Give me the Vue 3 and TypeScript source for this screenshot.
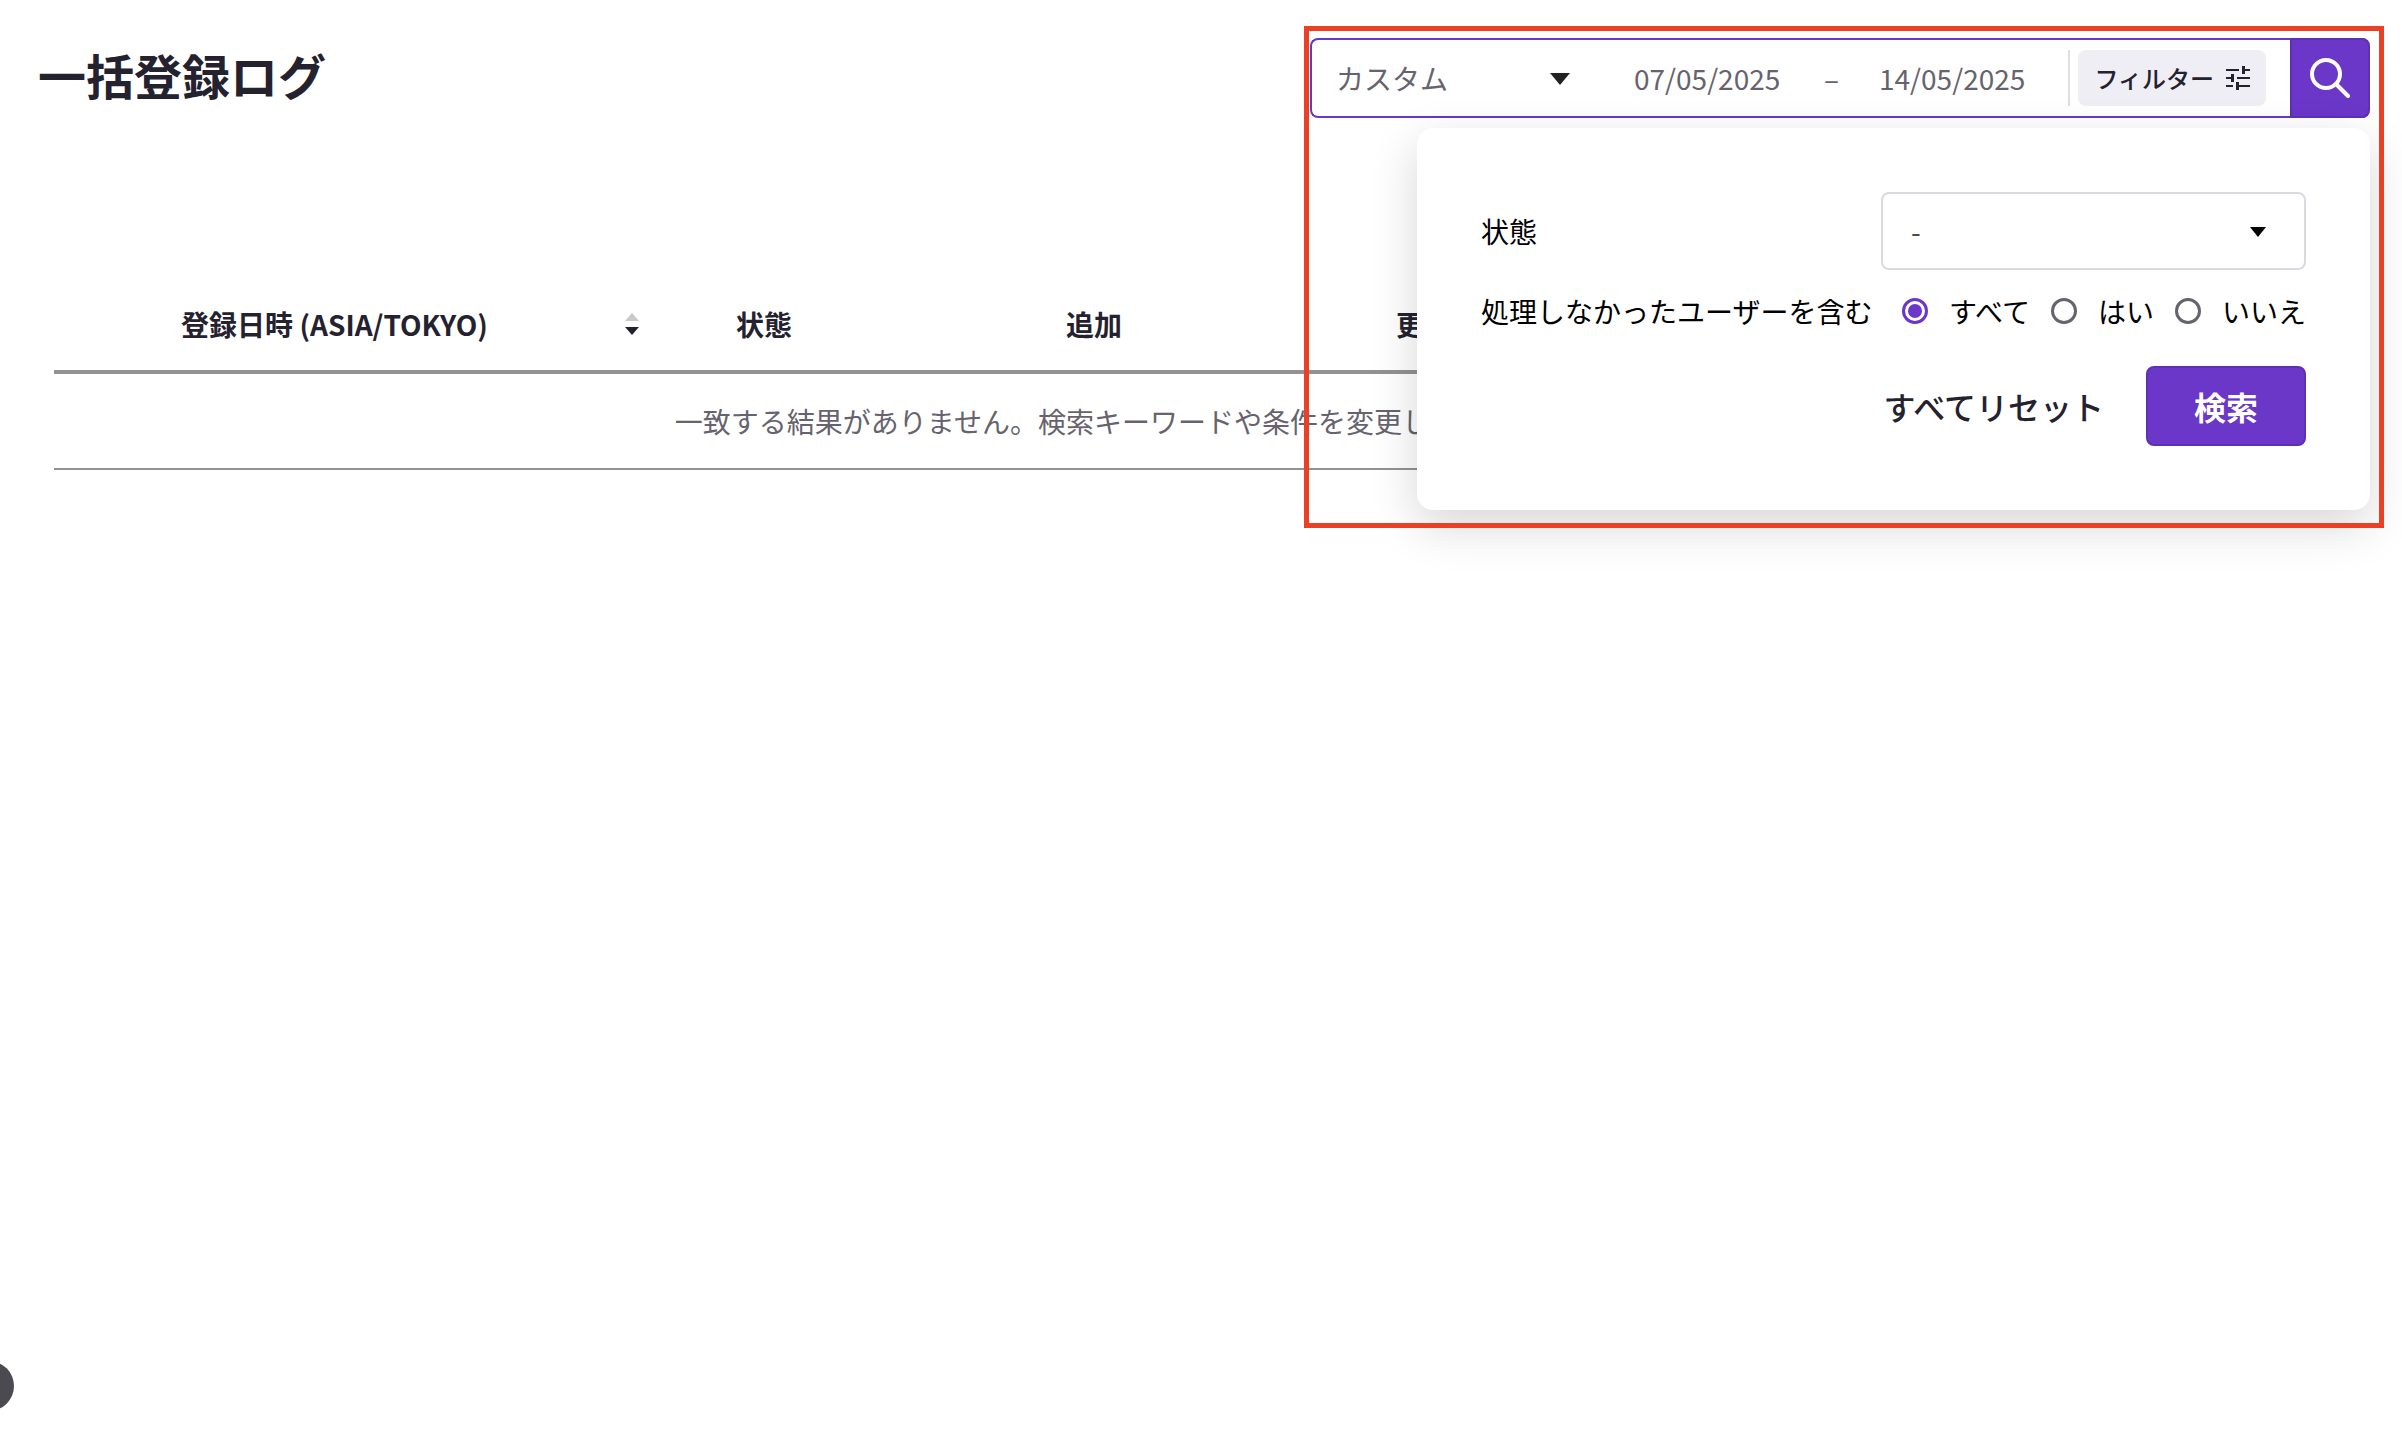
<script setup lang="ts">
import { ref } from 'vue'

const period = ref('カスタム')
const dateFrom = ref('07/05/2025')
const dateTo = ref('14/05/2025')
const status = ref('-')
const includeSkipped = ref('all')

const skippedOptions: { value: string; label: string }[] = [
  { value: 'all', label: 'すべて' },
  { value: 'yes', label: 'はい' },
  { value: 'no', label: 'いいえ' },
]

const columns: string[] = ['状態', '追加', '更新']

function resetAll(): void {
  status.value = '-'
  includeSkipped.value = 'all'
}
</script>

<template>
  <main class="page">
    <header class="top">
      <h1 class="title">一括登録ログ</h1>

      <div class="search">
        <form class="bar" @submit.prevent>
          <div class="period">
            <select v-model="period" class="period-select" aria-label="期間">
              <option>カスタム</option>
            </select>
            <svg class="caret" width="20" height="12" viewBox="0 0 20 12" aria-hidden="true">
              <path d="M0 0H20L10 12Z" fill="#222222" />
            </svg>
          </div>
          <div class="dates">
            <input v-model="dateFrom" class="date" type="text" aria-label="開始日" />
            <span class="dash">–</span>
            <input v-model="dateTo" class="date" type="text" aria-label="終了日" />
          </div>
          <span class="divider"></span>
          <button class="filter" type="button">
            フィルター
            <svg width="24" height="24" viewBox="0 0 24 24" aria-hidden="true">
              <path
                d="M0 3H13V5H0ZM16 0H19V3H24V5H19V8H16ZM0 11H5V8H8V16H5V13H0ZM11 11H24V13H11ZM0 19H7V21H0ZM10 16H13V19H24V21H13V24H10Z"
                fill="#25222f"
              />
            </svg>
          </button>
          <button class="go" type="submit" aria-label="検索">
            <svg width="40" height="40" viewBox="0 0 40 40" fill="none" aria-hidden="true">
              <circle cx="16" cy="16" r="14" stroke="#ffffff" stroke-width="4" />
              <path d="M26 26L38 38" stroke="#ffffff" stroke-width="4" stroke-linecap="round" />
            </svg>
          </button>
        </form>

        <form class="panel" @submit.prevent>
          <div class="row status-row">
            <label for="status">状態</label>
            <div class="status">
              <select id="status" v-model="status" class="status-select">
                <option>-</option>
              </select>
              <svg class="caret" width="16" height="10" viewBox="0 0 16 10" aria-hidden="true">
                <path d="M0 0H16L8 10Z" fill="#000000" />
              </svg>
            </div>
          </div>
          <div class="row radio-row" role="radiogroup" aria-labelledby="skipped">
            <span id="skipped">処理しなかったユーザーを含む</span>
            <div class="radios">
              <label v-for="o in skippedOptions" :key="o.value" class="option">
                <input v-model="includeSkipped" type="radio" name="skipped" :value="o.value" />
                {{ o.label }}
              </label>
            </div>
          </div>
          <div class="actions">
            <button class="reset" type="button" @click="resetAll">すべてリセット</button>
            <button class="submit" type="submit">検索</button>
          </div>
        </form>

        <div class="highlight"></div>
      </div>
    </header>

    <table class="log">
      <colgroup>
        <col class="col-date" />
        <col v-for="c in columns" :key="c" class="col-count" />
        <col />
      </colgroup>
      <thead>
        <tr>
          <th scope="col">
            <div class="sortable">
              <span class="sort-label">登録日時 (ASIA/TOKYO)</span>
              <svg width="14" height="22" viewBox="0 0 14 22" aria-hidden="true">
                <path d="M7 0L14 8H0Z" fill="#c8c8c8" />
                <path d="M0 14H14L7 22Z" fill="#25222f" />
              </svg>
            </div>
          </th>
          <th v-for="c in columns" :key="c" scope="col" class="count">{{ c }}</th>
          <td></td>
        </tr>
      </thead>
      <tbody>
        <tr>
          <td class="empty" colspan="5">
            一致する結果がありません。検索キーワードや条件を変更して再度お試しください。
          </td>
        </tr>
      </tbody>
    </table>

    <button class="floating" type="button" aria-label="ヘルプ"></button>
  </main>
</template>

<style>
body {
  margin: 0;
  background: #ffffff;
}
</style>

<style scoped>
.page {
  min-height: 100vh;
  overflow-x: hidden;
  position: relative;
  font-family: 'Noto Sans CJK JP', sans-serif;
  font-size: 28px;
  line-height: 42px;
  color: #000000;
}
*,
*::before {
  box-sizing: border-box;
}
button,
input,
select {
  font: inherit;
  margin: 0;
  padding: 0;
  border: 0;
  background: none;
}
svg {
  display: block;
  flex: none;
}
.top {
  display: flex;
  justify-content: space-between;
  align-items: flex-start;
  padding: 38px 32px 0 38px;
}
.title {
  margin: 0;
  font-size: 48px;
  line-height: 72px;
  font-weight: 700;
  color: #25222f;
}
.search {
  position: relative;
  z-index: 1;
  flex: 0 1 1060px;
}
.bar {
  display: flex;
  align-items: center;
  height: 80px;
  border: 2px solid #6836c8;
  border-right: 0;
  border-radius: 8px;
  background: #ffffff;
  color: #66636e;
}
.period,
.status {
  display: grid;
  align-items: center;
}
.period {
  width: 296px;
}
.period > *,
.status > * {
  grid-area: 1 / 1;
}
.caret {
  justify-self: end;
  margin-top: 2px;
  pointer-events: none;
}
.period .caret {
  margin-right: 38px;
}
select {
  appearance: none;
  width: 100%;
}
.period-select {
  height: 76px;
  padding-left: 24px;
  color: inherit;
}
.dates {
  display: flex;
  align-items: center;
  gap: 40px;
  margin-left: 26px;
}
.date {
  width: 150px;
  color: inherit;
}
.divider {
  width: 2px;
  height: 56px;
  margin-left: auto;
  background: #dfdfdf;
}
.filter {
  display: flex;
  align-items: center;
  gap: 12px;
  height: 56px;
  margin: 0 24px 0 8px;
  padding: 0 16px;
  border-radius: 8px;
  background: #efeef4;
  color: #25222f;
  font-size: 24px;
  font-weight: 500;
  white-space: nowrap;
}
.go {
  display: grid;
  place-items: center;
  width: 80px;
  height: 80px;
  border: 2px solid #5d30b4;
  border-radius: 0 8px 8px 0;
  background: #6a37c9;
}
.panel {
  position: absolute;
  top: calc(100% + 10px);
  right: 0;
  width: 953px;
  padding: 64px;
  border-radius: 16px;
  background: #ffffff;
  box-shadow: 0 16px 48px rgba(0, 0, 0, 0.16);
}
.row {
  display: flex;
  align-items: center;
  justify-content: space-between;
}
.status {
  width: 425px;
}
.status-select {
  height: 78px;
  padding-left: 28px;
  border: 2px solid #d9d9e0;
  border-radius: 8px;
  color: #4a4a50;
}
.status .caret {
  margin-right: 40px;
}
.radio-row {
  margin-top: 20px;
}
.radios {
  display: flex;
  gap: 21px;
}
.option {
  display: flex;
  align-items: center;
  gap: 21px;
}
.option input {
  appearance: none;
  display: grid;
  place-items: center;
  width: 26px;
  height: 26px;
  border: 3px solid #66636e;
  border-radius: 50%;
}
.option input:checked {
  border-color: #6a37c9;
}
.option input:checked::before {
  content: '';
  width: 14px;
  height: 14px;
  border-radius: 50%;
  background: #6a37c9;
}
.actions {
  display: flex;
  justify-content: flex-end;
  align-items: center;
  gap: 42px;
  margin-top: 34px;
  font-size: 32px;
}
.reset {
  color: #25222f;
  font-weight: 500;
}
.submit {
  width: 160px;
  height: 80px;
  border: 2px solid #5d30b4;
  border-radius: 8px;
  background: #6a37c9;
  color: #ffffff;
  font-weight: 700;
}
/* Call-out frame round the search bar and its open filter panel */
.highlight {
  position: absolute;
  top: -12px;
  right: -14px;
  left: -6px;
  height: 502px;
  border: 5px solid #eb4026;
  pointer-events: none;
}
.log {
  width: calc(100% - 98px);
  margin: 162px 44px 0 54px;
  table-layout: fixed;
  border-collapse: separate;
  border-spacing: 0;
}
.col-date {
  width: 595px;
}
.col-count {
  width: 330px;
}
.log th,
.log thead td {
  height: 94px;
  padding: 0 0 2px;
  border-bottom: 4px solid #929292;
  color: #25222f;
  font-weight: 700;
}
.log th.count {
  padding-right: 100px;
}
.sortable {
  display: flex;
  align-items: center;
  padding-right: 10px;
  gap: 10px;
}
.sort-label {
  flex: 1;
}
.log .empty {
  height: 96px;
  padding: 0;
  border-bottom: 2px solid #929292;
  color: #66636e;
  text-align: center;
}
.floating {
  position: fixed;
  left: -36px;
  bottom: 25px;
  width: 50px;
  height: 50px;
  border-radius: 50%;
  background: #4b4a50;
}
</style>
